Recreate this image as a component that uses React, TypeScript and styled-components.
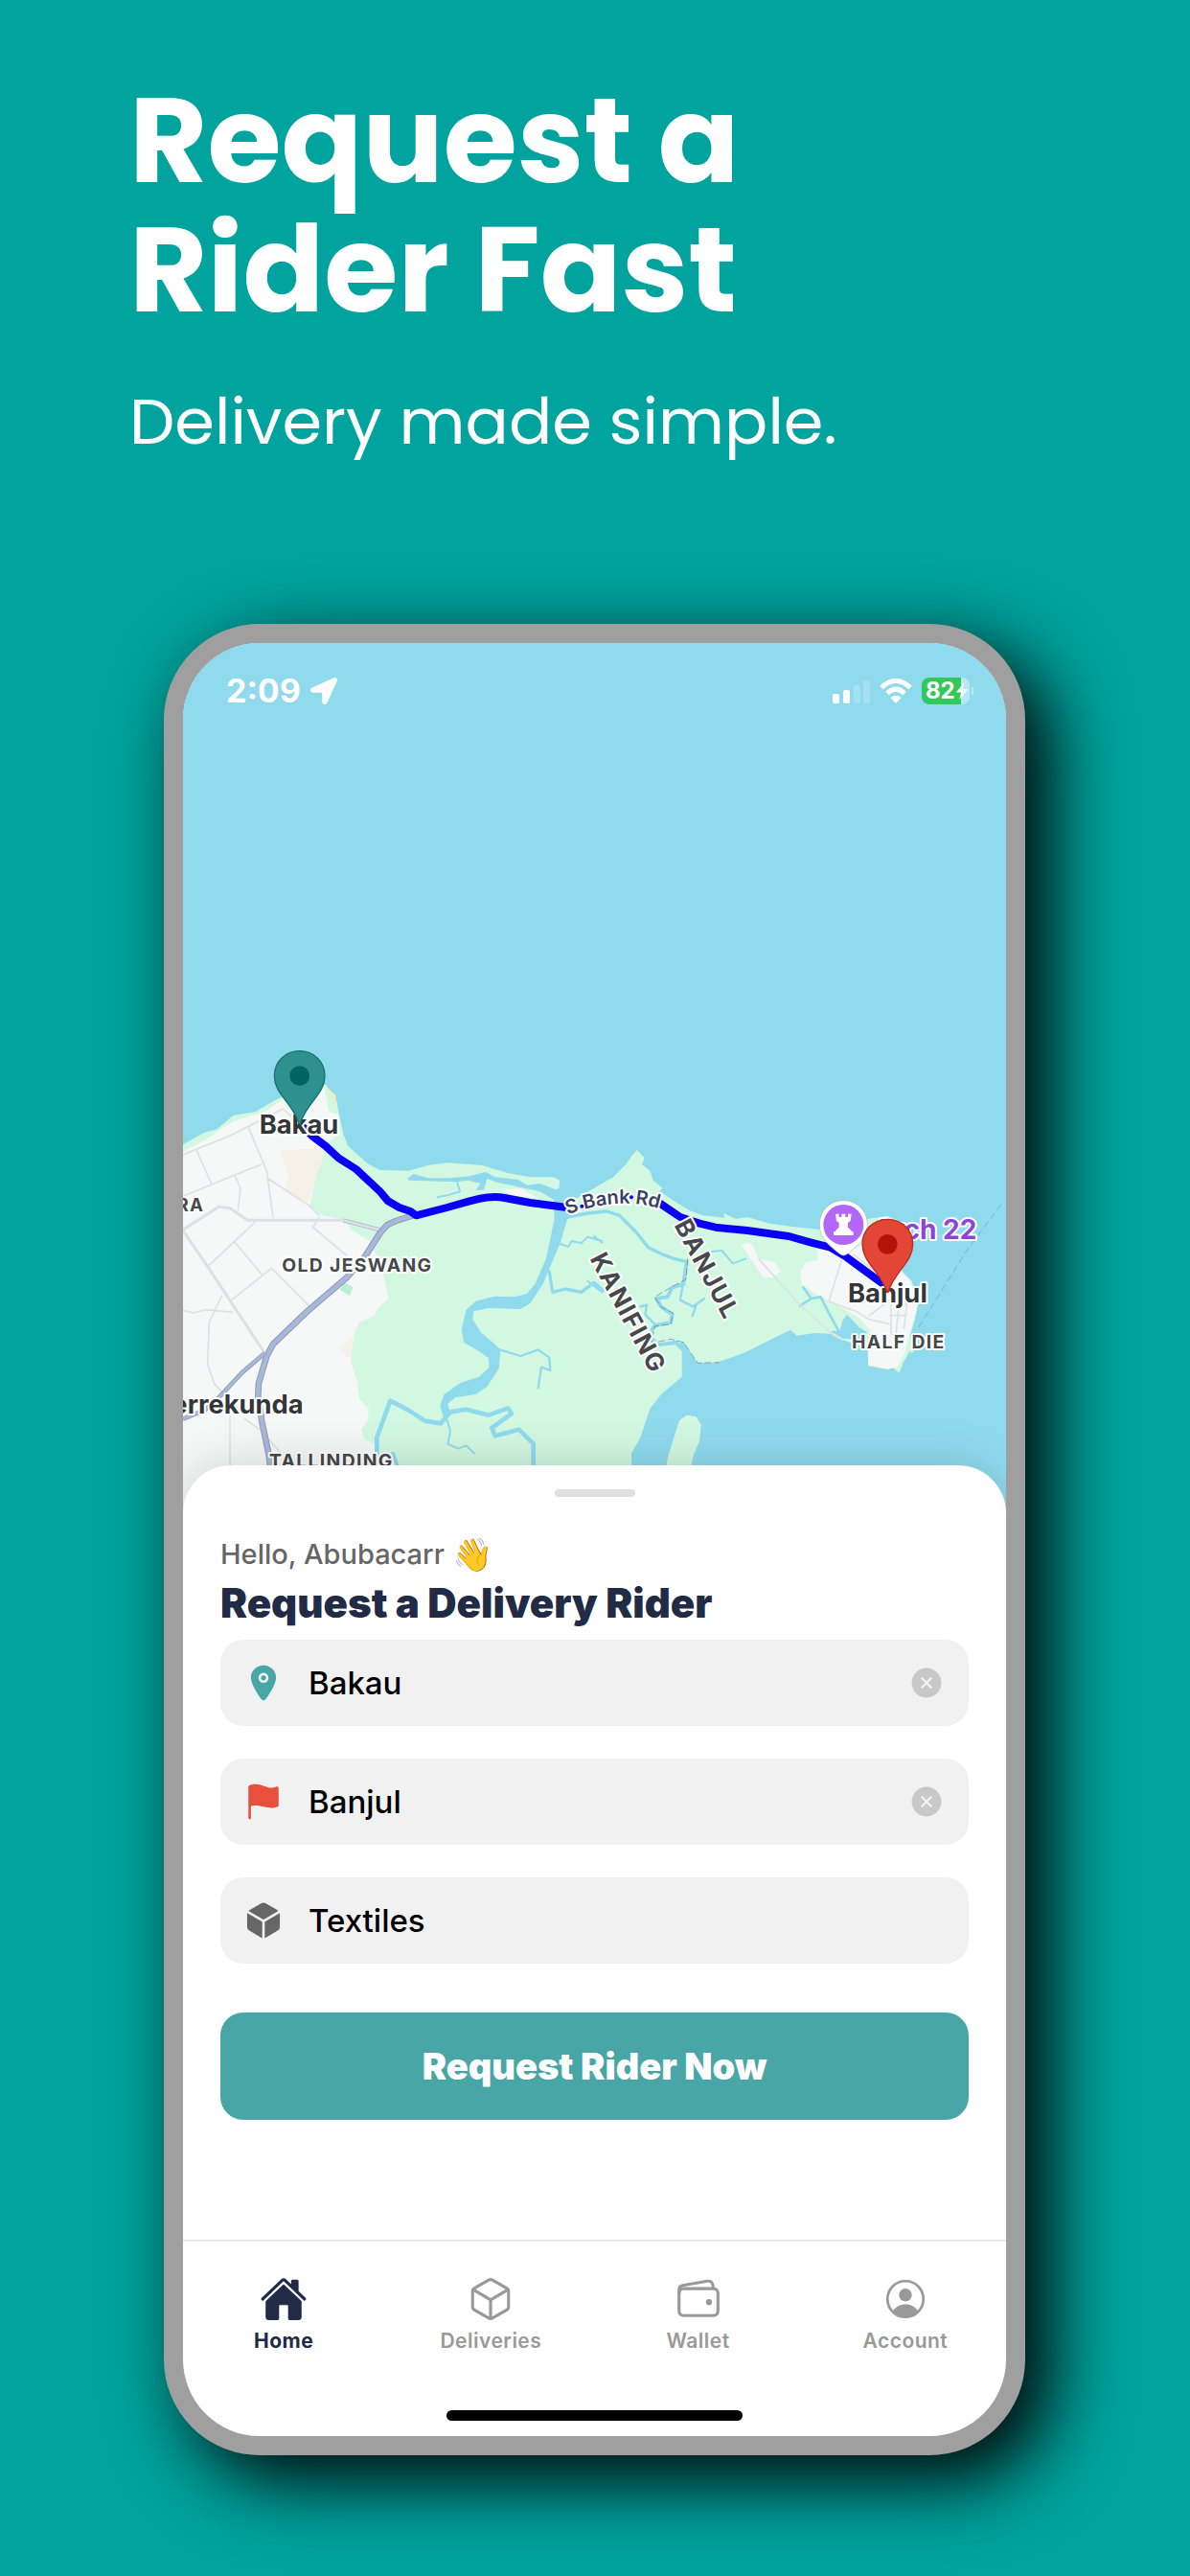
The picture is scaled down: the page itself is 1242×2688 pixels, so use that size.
import React, { useState } from "react";
import styled, { createGlobalStyle } from "styled-components";
import {
  IoCloseCircle,
  IoCube,
  IoCubeOutline,
  IoFlag,
  IoHome,
  IoLocation,
  IoWalletOutline,
} from "react-icons/io5";
import { FaLocationArrow } from "react-icons/fa";

const GlobalStyle = createGlobalStyle`
  *, *::before, *::after { box-sizing: border-box; }
  body {
    margin: 0;
    background: #00a39d;
    font-family: Inter, "Noto Sans", sans-serif;
  }
`;

const Page = styled.main`
  min-height: 100vh;
  padding: 79px 172px 127px 171px;
  background: #00a39d;
  overflow: hidden;
`;

const Intro = styled.header`
  margin: 0 0 171px -36px;
  color: #fff;
`;

const Headline = styled.h1`
  margin: 0;
  font-family: Poppins, Inter, sans-serif;
  font-size: 125px;
  line-height: 135px;
  font-weight: 700;
`;

const Tagline = styled.p`
  margin: 51px 0 0;
  font-family: Poppins, Inter, sans-serif;
  font-size: 67px;
  line-height: 80px;
  font-weight: 400;
`;

const Phone = styled.section`
  border: 20px solid #9f9f9f;
  border-radius: 100px;
  background: #9f9f9f;
  box-shadow: 26px 26px 80px #000;
`;

const Screen = styled.div`
  display: flex;
  flex-direction: column;
  overflow: hidden;
  border-radius: 80px;
  background: #fff;
`;

const MapArea = styled.div`
  position: relative;
  height: 908px;
  background: #90daee;
`;

const MapDrawing = styled.svg`
  display: block;
  width: 100%;
  height: 100%;
`;

const StatusBar = styled.div`
  position: absolute;
  top: 30px;
  left: 45px;
  right: 38px;
  display: flex;
  align-items: center;
  justify-content: space-between;
  height: 40px;
  color: #fff;
`;

const StatusGroup = styled.div`
  display: flex;
  align-items: center;
  gap: 10px;
`;

const Clock = styled.time`
  font-size: 34px;
  line-height: 40px;
  font-weight: 700;
`;

const Battery = styled.div`
  position: relative;
  display: flex;
  align-items: center;
  gap: 1px;
  width: 50px;
  height: 28px;
  padding-left: 4px;
  border-radius: 8px;
  background: linear-gradient(90deg, #34c759 82%, #b9e8f4 82%);
  font-size: 24px;
  line-height: 28px;
  font-weight: 700;

  &::after {
    content: "";
    position: absolute;
    right: -4px;
    top: 10px;
    width: 2px;
    height: 8px;
    border-radius: 1px;
    background: #b9e8f4;
  }
`;

const Sheet = styled.div`
  position: relative;
  display: flex;
  flex-direction: column;
  margin-top: -50px;
  padding: 25px 39px 125px;
  border-radius: 50px 50px 0 0;
  background: #fff;
  box-shadow: 0 0 50px rgba(0, 0, 0, 0.16);
`;

const Handle = styled.div`
  align-self: center;
  width: 84px;
  height: 8px;
  border-radius: 4px;
  background: #e0e0e0;
`;

const Greeting = styled.p`
  display: flex;
  align-items: center;
  gap: 8px;
  margin: 40px 0 0;
  color: #666;
  font-size: 29px;
  line-height: 40px;
  font-weight: 500;
`;

const Wave = styled.span`
  font-size: 34px;
`;

const Title = styled.h2`
  margin: 7px 0 0;
  color: #212b46;
  font-size: 42px;
  line-height: 48px;
  font-weight: 900;
`;

const Form = styled.form`
  display: flex;
  flex-direction: column;
  gap: 34px;
  margin-top: 14px;
`;

const Field = styled.label`
  display: flex;
  align-items: center;
  gap: 26px;
  height: 90px;
  padding: 0 25px 0 24px;
  border-radius: 24px;
  background: #f1f1f1;
`;

const FieldIcon = styled.span<{ $color: string }>`
  display: flex;
  color: ${(p) => p.$color};
`;

const FieldInput = styled.input`
  flex: 1;
  min-width: 0;
  padding: 0;
  border: 0;
  outline: 0;
  background: transparent;
  color: #000;
  font-family: inherit;
  font-size: 33px;
  line-height: 40px;
  font-weight: 500;
`;

const ClearButton = styled.button`
  display: flex;
  padding: 0;
  border: 0;
  background: none;
  color: #c8c8c8;
`;

const SubmitButton = styled.button`
  height: 112px;
  margin-top: 17px;
  border: 0;
  border-radius: 24px;
  background: #49a6a6;
  color: #fff;
  font-family: inherit;
  font-size: 38px;
  line-height: 48px;
  font-weight: 900;
`;

const TabBar = styled.nav`
  position: relative;
  display: grid;
  grid-template-columns: repeat(4, 1fr);
  margin: 0 -3px;
  padding-top: 35px;
  border-top: 2px solid #e8e8e8;
  background: #fff;
`;

const Tab = styled.a<{ $active?: boolean }>`
  display: flex;
  flex-direction: column;
  align-items: center;
  gap: 6px;
  color: ${(p) => (p.$active ? "#212b46" : "#999")};
  font-size: 21px;
  line-height: 26px;
  font-weight: ${(p) => (p.$active ? 700 : 600)};
  letter-spacing: 0.5px;
  text-decoration: none;
`;

const HomeIndicator = styled.div`
  align-self: center;
  width: 36%;
  height: 11px;
  margin: 59px 0 16px;
  border-radius: 6px;
  background: #000;
`;

function SignalIcon() {
  return (
    <svg width="39" height="26" viewBox="0 0 39 26" fill="#fff" aria-hidden="true">
      <rect x="0" y="16" width="7" height="10" rx="2" />
      <rect x="11" y="12" width="7" height="14" rx="2" />
      <rect x="22" y="7" width="7" height="19" rx="2" opacity="0.2" />
      <rect x="32" y="2" width="7" height="24" rx="2" opacity="0.2" />
    </svg>
  );
}

function WifiIcon() {
  return (
    <svg width="34" height="26" viewBox="0 0 34 26" fill="none" stroke="#fff" strokeWidth="5" aria-hidden="true">
      <path d="M2 9.500Q17-4.500 32 9.500" />
      <path d="M8 15.500Q17 7 26 15.500" />
      <path d="M11.500 20Q17 15.500 22.500 20L17 26Z" fill="#fff" stroke="none" />
    </svg>
  );
}

function BoltIcon() {
  return (
    <svg width="12" height="20" viewBox="0 0 13 20" fill="#fff" aria-hidden="true">
      <path d="M9 0L0 11.500H5.500L3.500 20L13 8H7.500Z" />
    </svg>
  );
}

function AccountIcon() {
  return (
    <svg width="50" height="50" viewBox="0 0 512 512" fill="currentColor" aria-hidden="true">
      <circle cx="256" cy="256" r="192" fill="none" stroke="currentColor" strokeWidth="28" />
      <circle cx="256" cy="212" r="69" />
      <path d="M124 384C150 335 202 312 256 312S362 335 388 384C352 424 307 446 256 446S160 424 124 384Z" />
    </svg>
  );
}

function Pin({ x, y, fill, edge, dot }: { x: number; y: number; fill: string; edge: string; dot: string }) {
  return (
    <g transform={`translate(${x} ${y})`}>
      <path
        d="M0-78C-45-78-79-44-79 0C-79 40-52 64-30 96C-14 119-6 136-3 148Q0 154 3 148C6 136 14 119 30 96C52 64 79 40 79 0C79-44 45-78 0-78Z"
        fill={fill}
        stroke={edge}
        strokeWidth="4"
      />
      <circle r="31" fill={dot} />
    </g>
  );
}

const halo = {
  stroke: "#fff",
  strokeWidth: 12,
  strokeLinejoin: "round" as const,
  paintOrder: "stroke",
  fontFamily: "Inter, sans-serif",
  fontWeight: 700,
};

function RouteMap() {
  return (
    <MapDrawing viewBox="33 -1167 2577 2724" preserveAspectRatio="xMidYMin slice" role="img" aria-label="Route from Bakau to Banjul">
      <rect x="33" y="-1167" width="2577" height="2724" fill="#90daee" />

      {/* land */}
      <path
        fill="#d3f8e2"
        d="M0 420L33 403L100 365L140 355L190 312L260 300L320 265L400 225L480 215L500 245L515 270L520 300L535 370L548 405L580 435L610 462L650 483L740 485L800 468L860 460L970 468L1050 492L1120 505L1195 505L1212 515L1210 545L1240 588L1275 565L1320 540L1380 505L1420 465L1440 435L1455 420L1478 445L1470 465L1495 485L1505 515L1535 540L1525 548L1570 580L1620 610L1660 625L1730 632L1725 618L1765 636L1800 630L1870 650L1940 660L2020 668L2090 660L2180 635L2240 627L2280 645L2290 700L2285 800L2315 830L2335 900L2325 950L2310 1000L2320 1050L2290 1085L2275 1118L2255 1100L2240 1108L2180 1095L2175 1040L2100 1015L2060 995L2010 993L1955 1001L1935 983L1880 1010L1790 1055L1700 1087L1645 1087L1625 1060L1600 1020L1575 1030L1595 1050L1595 1130L1530 1185L1495 1230L1465 1320L1437 1370L1440 1600L0 1600Z"
      />
      <path fill="#d3f8e2" d="M1540 1450L1550 1385L1565 1335L1588 1265L1610 1250L1640 1255L1655 1280L1650 1330L1630 1380L1615 1450Z" />

      {/* built-up areas */}
      <path
        fill="#f6f7f7"
        d="M33 425L100 390L190 330L290 300L340 265L400 230L475 225L490 300L520 310L525 370L480 400L450 500L430 595L470 625L540 640L560 670L610 700L640 750L665 830L676 885L645 915L632 940L585 960L562 1010L560 1090L580 1150L585 1200L615 1230L610 1270L590 1295L602 1325L635 1345L645 1380L700 1390L700 1600L33 1600Z"
      />
      <path fill="#f6f7f7" d="M1782 720L1795 709L1815 715L1835 760L1885 770L1905 800L1880 820L1850 820L1820 775Z" />
      <path
        fill="#f6f7f7"
        d="M1985 770L2020 765L2020 730L2100 745L2160 720L2270 790L2310 830L2335 900L2310 985L2295 1050L2270 1100L2240 1105L2178 1095L2185 985L2150 945L2080 905L2020 875L1970 840L1965 800Z"
      />
      <path fill="#f6f1e8" d="M335 425L390 418L475 415L470 450L450 500L425 585L370 560L350 545L365 500Z" />
      <path fill="#f6f1e8" d="M570 1000L520 1040L557 1075Z" />
      <path fill="#f9e6c4" d="M478 218L512 250L514 290L500 255Z" />
      <path fill="#b9f0d2" d="M538 835L566 850L555 876L524 857Z" />
      <path fill="#f6f7f7" d="M1030 545L1090 540L1145 572L1060 562Z" />

      {/* inlets and river */}
      <path
        fill="#90daee"
        d="M1195 545L1195 640L1170 760L1135 840L1110 870L1070 880L1010 878L950 893L920 920L905 980L912 1022L960 1050L990 1072L992 1100L960 1130L900 1150L850 1185L838 1220L850 1262L872 1248L862 1215L885 1195L950 1185L985 1160L1022 1105L1027 1045L1000 1020L965 990L940 950L942 925L990 915L1090 918L1120 900L1160 840L1185 780L1215 710L1235 640L1260 610L1240 585L1210 540Z"
      />
      <path
        fill="#90daee"
        d="M735 510L755 495L800 508L870 508L930 502L980 488L1010 505L1080 512L1110 530L1150 525L1205 545L1200 580L1150 550L1080 535L1020 522L985 510L975 545L950 545L965 525L925 515L890 520L740 515Z"
      />
      <path fill="#90daee" d="M2090 985L2098 955L2112 935L2150 975L2175 990L2165 1015L2100 1010L2060 988Z" />
      <g fill="none" stroke="#90daee" strokeLinejoin="round" strokeLinecap="round">
        <path strokeWidth="6" d="M890 515L900 550L860 562L830 568" />
        <path strokeWidth="10" d="M1235 630L1300 618L1360 612L1400 625L1450 675L1490 725L1530 745L1570 760L1610 770" />
        <path strokeWidth="6" d="M1215 715L1240 722L1250 705L1280 712L1300 692L1345 705" />
        <path strokeWidth="10" d="M1180 800L1190 865L1230 855L1280 865L1320 835L1350 860" />
        <path strokeWidth="7" d="M1025 1045L1090 1065L1145 1045L1180 1070L1183 1110L1155 1100L1145 1165" />
        <path strokeWidth="14" d="M640 1400L640 1320L682 1205L740 1235L790 1268L840 1276L870 1240L920 1232L990 1250L1050 1228L1062 1245L1000 1290L1010 1315L1085 1295L1130 1340L1130 1440" />
        <path strokeWidth="6" d="M860 1265L870 1300L862 1340L895 1355L920 1345L945 1370" />
        <path strokeWidth="12" d="M690 1370L708 1420" />
        <path strokeWidth="12" d="M1610 770L1600 840L1565 850L1550 880L1515 885L1530 910L1565 935L1560 960L1510 970L1490 1000L1520 1030L1580 1022" />
        <path strokeWidth="7" d="M1600 830L1590 890L1630 910L1665 885M1640 905L1628 940M1465 910L1485 905L1480 935L1510 965" />
        <path strokeWidth="6" d="M1660 740L1720 735L1755 775L1795 760M1320 690L1345 710M1300 830L1345 865" />
        <path strokeWidth="8" d="M1975 850L2000 885L2030 880L2055 930L2085 985M2000 885L1965 908" />
        <path strokeWidth="8" d="M2310 1055L2290 1090" />
      </g>
      <g fill="none" stroke="#6d7f82" strokeWidth="2" strokeDasharray="22 8">
        <path d="M1613 760L1608 825L1570 845L1510 880L1530 912L1568 930L1560 965L1510 972L1500 1025L1560 1012L1600 1022L1645 1087L1710 1085" />
      </g>
      <path d="M2595 590L2490 730L2330 985" fill="none" stroke="#68b8d6" strokeWidth="3" strokeDasharray="22 12" />

      {/* streets */}
      <g fill="none" stroke="#dde1e5" strokeLinejoin="round">
        <path strokeWidth="5" d="M33 435L180 375L345 292L380 320M75 420L122 525M238 350L295 485L315 632M33 565L190 500L280 465M195 500L213 540L205 610M300 510L430 595L460 625" />
        <path strokeWidth="5" d="M460 630L440 662L545 750M260 645L110 785M195 708L280 810M185 890L310 790L430 910M33 922L65 930L105 920L190 928M155 875L115 960L110 1090L130 1150L165 1190M180 1230L180 1400L190 1430M225 1260L280 1300L335 1365" />
        <path strokeWidth="9" d="M33 670L145 598L180 602L235 640L535 640" />
        <path strokeWidth="9" d="M33 672L110 785L285 1050" />
        <path strokeWidth="5" d="M1835 760L1960 900L2070 1000L2100 1015M2095 765L2055 895L2140 925L2180 950L2245 965M2180 940L2245 890L2300 905M2250 890V1000M2275 900L2265 1000M2300 900L2290 980M2245 938H2300M2130 745L2200 800" />
      </g>
      <g fill="none" strokeLinejoin="round">
        <path stroke="#b7bfca" strokeWidth="13" d="M535 640L650 670" />
        <path stroke="#dde3e8" strokeWidth="7" d="M535 640L650 670" />
        <path stroke="#8c9bbd" strokeWidth="20" d="M763 622L705 640L672 655L650 680L602 755L545 820L420 927L315 1028L295 1065L270 1150L268 1190L280 1270L302 1375L310 1440" />
        <path stroke="#a9b8d6" strokeWidth="14" d="M763 622L705 640L672 655L650 680L602 755L545 820L420 927L315 1028L295 1065L270 1150L268 1190L280 1270L302 1375L310 1440" />
        <path stroke="#8c9bbd" strokeWidth="14" d="M290 1055L220 1115L140 1200L100 1235L33 1262" />
        <path stroke="#a9b8d6" strokeWidth="9" d="M290 1055L220 1115L140 1200L100 1235L33 1262" />
      </g>

      {/* delivery route */}
      <path
        fill="none"
        stroke="#0a00f5"
        strokeWidth="24"
        strokeLinejoin="round"
        d="M400 340L440 378L480 408L520 445L575 480L650 550L675 580L710 600L745 612L763 625L860 600L930 580Q1000 560 1040 570L1120 585L1235 600M1525 586L1590 630L1650 650L1700 662L1800 672L1930 690L2000 710L2060 725L2110 755L2230 843"
      />

      {/* place names */}
      <g {...halo} fill="#333638">
        <text x="272" y="370" fontSize="82">Bakau</text>
        <text x="2115" y="898" fontSize="82">Banjul</text>
        <text x="410" y="1245" fontSize="82" textAnchor="end">Serrekunda</text>
        <g fill="#45494b" letterSpacing="4">
          <text x="100" y="613" fontSize="56" textAnchor="end">RA</text>
          <text x="343" y="800" fontSize="58">OLD JESWANG</text>
          <text x="303" y="1412" fontSize="58">TALLINDING</text>
          <text x="2127" y="1042" fontSize="58">HALF DIE</text>
          <text transform="translate(1306 760) rotate(62)" fontSize="78">KANIFING</text>
          <text transform="translate(1570 655) rotate(62)" fontSize="78">BANJUL</text>
        </g>
        <text x="2518" y="698" fontSize="84" textAnchor="end" fill="#8b46d9">Arch 22</text>
        <path id="bank-road" d="M1238 622C1320 592 1430 570 1530 606" fill="none" stroke="none" />
        <text fontSize="60" fontWeight="600" fill="#3a3f66">
          <textPath href="#bank-road">S Bank Rd</textPath>
        </text>
        <g fill="#0a00f5" stroke="none">
          <circle cx="1282" cy="596" r="6" />
          <circle cx="1437" cy="568" r="6" />
        </g>
      </g>

      {/* landmark */}
      <g transform="translate(2101 654)">
        <path d="M0-76C-43-76-75-43-75 0C-75 38-50 60-26 80Q-8 96 0 96T26 80C50 60 75 38 75 0C75-43 43-76 0-76Z" fill="#fff" stroke="#a9b6bd" strokeWidth="2" />
        <circle r="63" fill="#b266fb" />
        <path fill="#fff" d="M-25-34H-14V-24H-6V-34H6V-24H14V-34H25L22-12L14-7V8Q22 14 27 22H31V33H-31V22H-27Q-22 14-14 8V-7L-22-12Z" />
      </g>
      <Pin x={398} y={188} fill="#2f918e" edge="#14716f" dot="#006561" />
      <Pin x={2239} y={715} fill="#e34537" edge="#b92b20" dot="#b21409" />
    </MapDrawing>
  );
}

interface PlaceFieldProps {
  label: string;
  initial: string;
  color: string;
  icon: React.ReactNode;
  clearable?: boolean;
}

function PlaceField({ label, initial, color, icon, clearable }: PlaceFieldProps) {
  const [value, setValue] = useState(initial);
  return (
    <Field>
      <FieldIcon $color={color}>{icon}</FieldIcon>
      <FieldInput aria-label={label} value={value} onChange={(e) => setValue(e.target.value)} />
      {clearable && (
        <ClearButton type="button" aria-label={`Clear ${label}`} onClick={() => setValue("")}>
          <IoCloseCircle size={38} />
        </ClearButton>
      )}
    </Field>
  );
}

export default function App() {
  return (
    <Page>
      <GlobalStyle />
      <Intro>
        <Headline>
          Request a<br />
          Rider Fast
        </Headline>
        <Tagline>Delivery made simple.</Tagline>
      </Intro>
      <Phone>
        <Screen>
          <MapArea>
            <RouteMap />
            <StatusBar>
              <StatusGroup>
                <Clock>2:09</Clock>
                <FaLocationArrow size={28} />
              </StatusGroup>
              <StatusGroup>
                <SignalIcon />
                <WifiIcon />
                <Battery>
                  82
                  <BoltIcon />
                </Battery>
              </StatusGroup>
            </StatusBar>
          </MapArea>
          <Sheet>
            <Handle />
            <Greeting>
              Hello, Abubacarr <Wave>👋</Wave>
            </Greeting>
            <Title>Request a Delivery Rider</Title>
            <Form onSubmit={(e) => e.preventDefault()}>
              <PlaceField label="Pickup" initial="Bakau" color="#49a6a6" icon={<IoLocation size={42} />} clearable />
              <PlaceField label="Drop-off" initial="Banjul" color="#e94f3d" icon={<IoFlag size={42} />} clearable />
              <PlaceField label="Package" initial="Textiles" color="#666" icon={<IoCube size={42} />} />
              <SubmitButton type="submit">Request Rider Now</SubmitButton>
            </Form>
          </Sheet>
          <TabBar>
            <Tab href="#home" $active aria-current="page">
              <IoHome size={50} />
              Home
            </Tab>
            <Tab href="#deliveries">
              <IoCubeOutline size={50} />
              Deliveries
            </Tab>
            <Tab href="#wallet">
              <IoWalletOutline size={50} />
              Wallet
            </Tab>
            <Tab href="#account">
              <AccountIcon />
              Account
            </Tab>
          </TabBar>
          <HomeIndicator />
        </Screen>
      </Phone>
    </Page>
  );
}
